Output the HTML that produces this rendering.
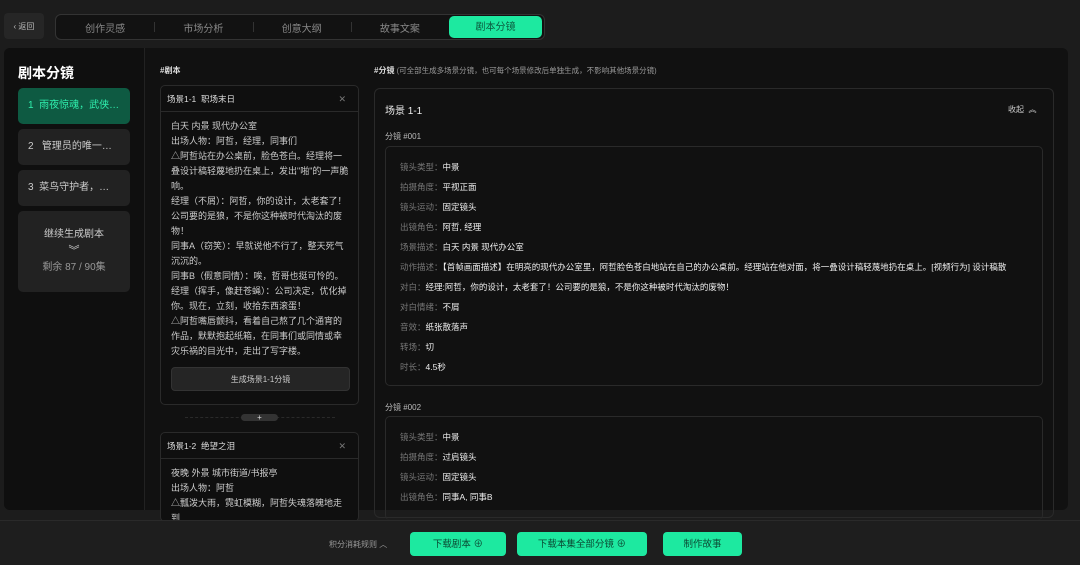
<!DOCTYPE html>
<html><head><meta charset="utf-8"><style>
*{box-sizing:border-box;margin:0;padding:0}
body{width:1080px;height:565px;overflow:hidden;background:#1c1c1c;font-family:"Liberation Sans","Noto Sans CJK SC",sans-serif;color:#ddd;position:relative}
.abs{position:absolute}
.back{left:4px;top:13px;width:40px;height:26px;background:#262626;border-radius:4px;font-size:8px;color:#bbb;display:flex;align-items:center;justify-content:center}
.tabs{left:55px;top:14px;width:490px;height:26px;border:1px solid #333;border-radius:6px;background:#121212;display:flex;align-items:center}
.tab{flex:1;text-align:center;font-size:10px;color:#888;position:relative;height:22px;line-height:22px;padding-top:3px}
.tab+.tab:before{content:"";position:absolute;left:0;top:6px;height:10px;border-left:1px solid #333}
.tab.on{background:#1de9a0;color:#0c5a3e;border-radius:5px;margin-right:2px;flex:0 0 93px;padding-top:1px}
.tab.on:before{display:none}
.main{left:4px;top:48px;width:1064px;height:462px;background:#111;border-radius:6px}
.side{left:4px;top:48px;width:141px;height:462px;border-right:1px solid #222;background:#0f0f0f;border-radius:6px 0 0 6px}
h1{position:absolute;left:18px;top:63px;font-size:14px;color:#fff;font-weight:bold}
.ep{left:18px;width:112px;height:36px;border-radius:5px;background:#222;font-size:10px;color:#ccc;line-height:36px;padding-left:10px;white-space:nowrap}
.ep.on{background:#0e5a42;color:#2ff0ae}
.more{left:18px;top:211px;width:112px;height:81px;background:#222;border-radius:5px;text-align:center;font-size:10px;color:#ccc;padding-top:16px;line-height:16px}
.lbl{font-size:8px;color:#ddd;font-weight:bold}
.card{left:160px;width:199px;border:1px solid #2a2a2a;border-radius:5px;background:#0f0f0f;overflow:hidden}
.card .hd{height:26px;border-bottom:1px solid #2a2a2a;font-size:8.5px;color:#ddd;line-height:26px;padding-left:6px;position:relative}
.card .hd span{position:absolute;right:12px;color:#777;font-size:9px}
.card .bd{padding:7px 8px 7px 10px;font-size:9px;line-height:15px;color:#ccc}
.gen{margin:8px 0 4px;height:24px;background:#252525;border:1px solid #333;border-radius:4px;text-align:center;line-height:24px;font-size:8px;color:#ccc}
.scene{left:374px;top:88px;width:680px;height:430px;border:1px solid #2a2a2a;border-radius:6px}
.shot{left:385px;width:658px;border:1px solid #2a2a2a;border-radius:5px;padding:10px 14px 0}
.row{font-size:8.5px;height:20px;line-height:20px;color:#eee;white-space:nowrap;overflow:hidden}
.row i{font-style:normal;color:#777}
.bot{left:0;top:520px;width:1080px;height:45px;background:#1e1e1e;border-top:1px solid #2a2a2a}
.btn{top:532px;height:24px;background:#1de9a0;color:#0b4a33;border-radius:4px;font-size:9.5px;text-align:center;line-height:26px}
</style></head><body>
<div class="abs back">‹ 返回</div>
<div class="abs tabs"><div class="tab">创作灵感</div><div class="tab">市场分析</div><div class="tab">创意大纲</div><div class="tab">故事文案</div><div class="tab on">剧本分镜</div></div>
<div class="abs main"></div>
<div class="abs side"></div>
<h1>剧本分镜</h1>
<div class="abs ep on" style="top:88px">1&nbsp; 雨夜惊魂，武侠…</div>
<div class="abs ep" style="top:129px">2&nbsp;&nbsp; 管理员的唯一…</div>
<div class="abs ep" style="top:170px">3&nbsp; 菜鸟守护者，…</div>
<div class="abs more">继续生成剧本<br><span style="font-size:11px">︾</span><br><span style="color:#999">剩余 87 / 90集</span></div>
<div class="abs lbl" style="left:160px;top:65px">#剧本</div>
<div class="abs card" style="top:85px;height:320px"><div class="hd">场景1-1&nbsp;&nbsp;职场末日<span>✕</span></div><div class="bd">白天 内景 现代办公室<br>出场人物：阿哲，经理，同事们<br>△阿哲站在办公桌前，脸色苍白。经理将一叠设计稿轻蔑地扔在桌上，发出"啪"的一声脆响。<br>经理（不屑）：阿哲，你的设计，太老套了！公司要的是狼，不是你这种被时代淘汰的废物！<br>同事A（窃笑）：早就说他不行了，整天死气沉沉的。<br>同事B（假意同情）：唉，哲哥也挺可怜的。<br>经理（挥手，像赶苍蝇）：公司决定，优化掉你。现在，立刻，收拾东西滚蛋！<br>△阿哲嘴唇颤抖，看着自己熬了几个通宵的作品，默默抱起纸箱，在同事们或同情或幸灾乐祸的目光中，走出了写字楼。<div class="gen">生成场景1-1分镜</div></div></div>
<div class="abs" style="left:185px;top:417px;width:150px;border-top:1px dashed #2a2a2a"></div>
<div class="abs" style="left:241px;top:414px;width:37px;height:7px;background:#333;border-radius:4px;font-size:8px;line-height:7px;text-align:center;color:#ddd">+</div>
<div class="abs card" style="top:432px;height:90px"><div class="hd">场景1-2&nbsp;&nbsp;绝望之泪<span>✕</span></div><div class="bd">夜晚 外景 城市街道/书报亭<br>出场人物：阿哲<br>△瓢泼大雨，霓虹模糊，阿哲失魂落魄地走到</div></div>
<div class="abs lbl" style="left:374px;top:65px">#分镜 <span style="font-weight:normal;color:#999;font-size:7.5px">(可全部生成多场景分镜，也可每个场景修改后单独生成，不影响其他场景分镜)</span></div>
<div class="abs scene"></div>
<div class="abs" style="left:385px;top:102px;font-size:10px;color:#eee">场景 1-1</div>
<div class="abs" style="left:1008px;top:104px;font-size:8px;color:#ccc">收起 &nbsp;︽</div>
<div class="abs" style="left:385px;top:131px;font-size:8px;color:#bbb">分镜 #001</div>
<div class="abs shot" style="top:146px;height:240px">
<div class="row"><i>镜头类型：</i>中景</div><div class="row"><i>拍摄角度：</i>平视正面</div><div class="row"><i>镜头运动：</i>固定镜头</div><div class="row"><i>出镜角色：</i>阿哲, 经理</div><div class="row"><i>场景描述：</i>白天 内景 现代办公室</div><div class="row"><i>动作描述：</i>【首帧画面描述】在明亮的现代办公室里，阿哲脸色苍白地站在自己的办公桌前。经理站在他对面，将一叠设计稿轻蔑地扔在桌上。[视频行为] 设计稿散</div><div class="row"><i>对白：</i>经理:阿哲，你的设计，太老套了！公司要的是狼，不是你这种被时代淘汰的废物！</div><div class="row"><i>对白情绪：</i>不屑</div><div class="row"><i>音效：</i>纸张散落声</div><div class="row"><i>转场：</i>切</div><div class="row"><i>时长：</i>4.5秒</div></div>
<div class="abs" style="left:385px;top:402px;font-size:8px;color:#bbb">分镜 #002</div>
<div class="abs shot" style="top:416px;height:104px;border-bottom:none">
<div class="row"><i>镜头类型：</i>中景</div><div class="row"><i>拍摄角度：</i>过肩镜头</div><div class="row"><i>镜头运动：</i>固定镜头</div><div class="row"><i>出镜角色：</i>同事A, 同事B</div></div>
<div class="abs bot"></div>
<div class="abs" style="left:329px;top:539px;font-size:8px;color:#999">积分消耗规则 ︿</div>
<div class="abs btn" style="left:410px;width:96px">下载剧本 ⊕</div>
<div class="abs btn" style="left:517px;width:130px">下载本集全部分镜 ⊕</div>
<div class="abs btn" style="left:663px;width:79px">制作故事</div>
</body></html>
